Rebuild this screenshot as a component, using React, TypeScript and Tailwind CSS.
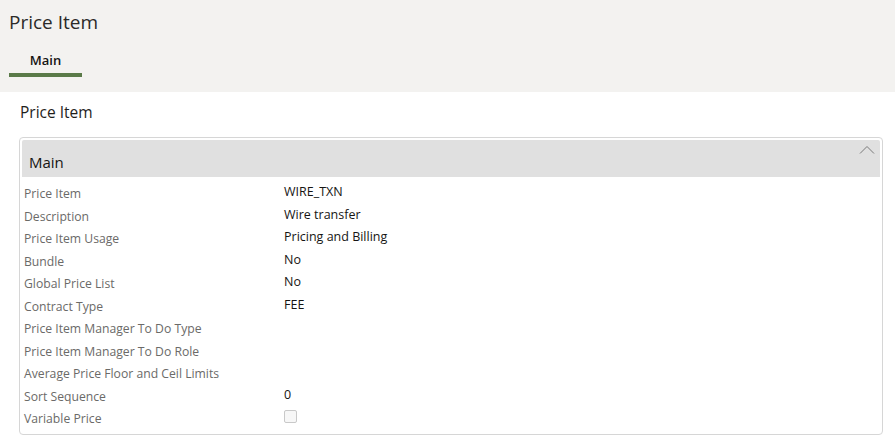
const rows = [
  { label: "Price Item", value: "WIRE_TXN" },
  { label: "Description", value: "Wire transfer" },
  { label: "Price Item Usage", value: "Pricing and Billing" },
  { label: "Bundle", value: "No" },
  { label: "Global Price List", value: "No" },
  { label: "Contract Type", value: "FEE" },
  { label: "Price Item Manager To Do Type", value: "" },
  { label: "Price Item Manager To Do Role", value: "" },
  { label: "Average Price Floor and Ceil Limits", value: "" },
  { label: "Sort Sequence", value: "0" },
  { label: "Variable Price", value: null },
];

const App = () => (
  <div className="w-[895px] h-[442px] overflow-hidden bg-white font-['Open_Sans',sans-serif] text-[#161513]">
    {/* Page header */}
    <div className="bg-[#f3f2f0] h-[92px] pl-[9px] pt-[9px]">
      <h1 className="text-[19px] leading-[26px] font-normal text-[#2b2a28]">Price Item</h1>
      <div className="mt-[16px] w-[73px] border-b-[4px] border-[#5a7a48] pb-[4px] text-center text-[13px] leading-[18px] font-semibold">
        Main
      </div>
    </div>

    {/* Content */}
    <div className="pt-[9px]">
      <h2 className="pl-[20px] text-[15.5px] leading-[22px] font-normal text-[#1f1e1c]">Price Item</h2>

      <div className="ml-[19px] mr-[12px] mt-[14px] border border-[#d6d6d6] rounded-[4px] p-[2px] pb-[4px]">
        <div className="relative h-[37px] bg-[#e0e0e0] rounded-t-[2px] flex items-center pl-[7px] pt-[7px]">
          <span className="text-[15px] leading-[20px]">Main</span>
          <svg className="absolute right-[5px] top-[5px]" width="16" height="10" viewBox="0 0 16 10" fill="none">
            <path d="M1 8.5 L8 1.5 L15 8.5" stroke="#7a7a7a" strokeWidth="1" />
          </svg>
        </div>

        <div className="pt-[5px] pl-[2px]">
          {rows.map((r) => (
            <div key={r.label} className="flex h-[22.5px]">
              <div className="w-[260px] pt-[3px] text-[12.2px] leading-[18px] text-[#6b6a68]">{r.label}</div>
              <div className="pt-[1px] text-[12.5px] leading-[18px] text-[#161513]">
                {r.value === null ? (
                  <span className="mt-[2px] inline-block w-[13px] h-[13px] border border-[#c9c9c9] rounded-[2px] bg-[#f7f7f7]" />
                ) : (
                  r.value
                )}
              </div>
            </div>
          ))}
        </div>
      </div>
    </div>
  </div>
);

export default App;
